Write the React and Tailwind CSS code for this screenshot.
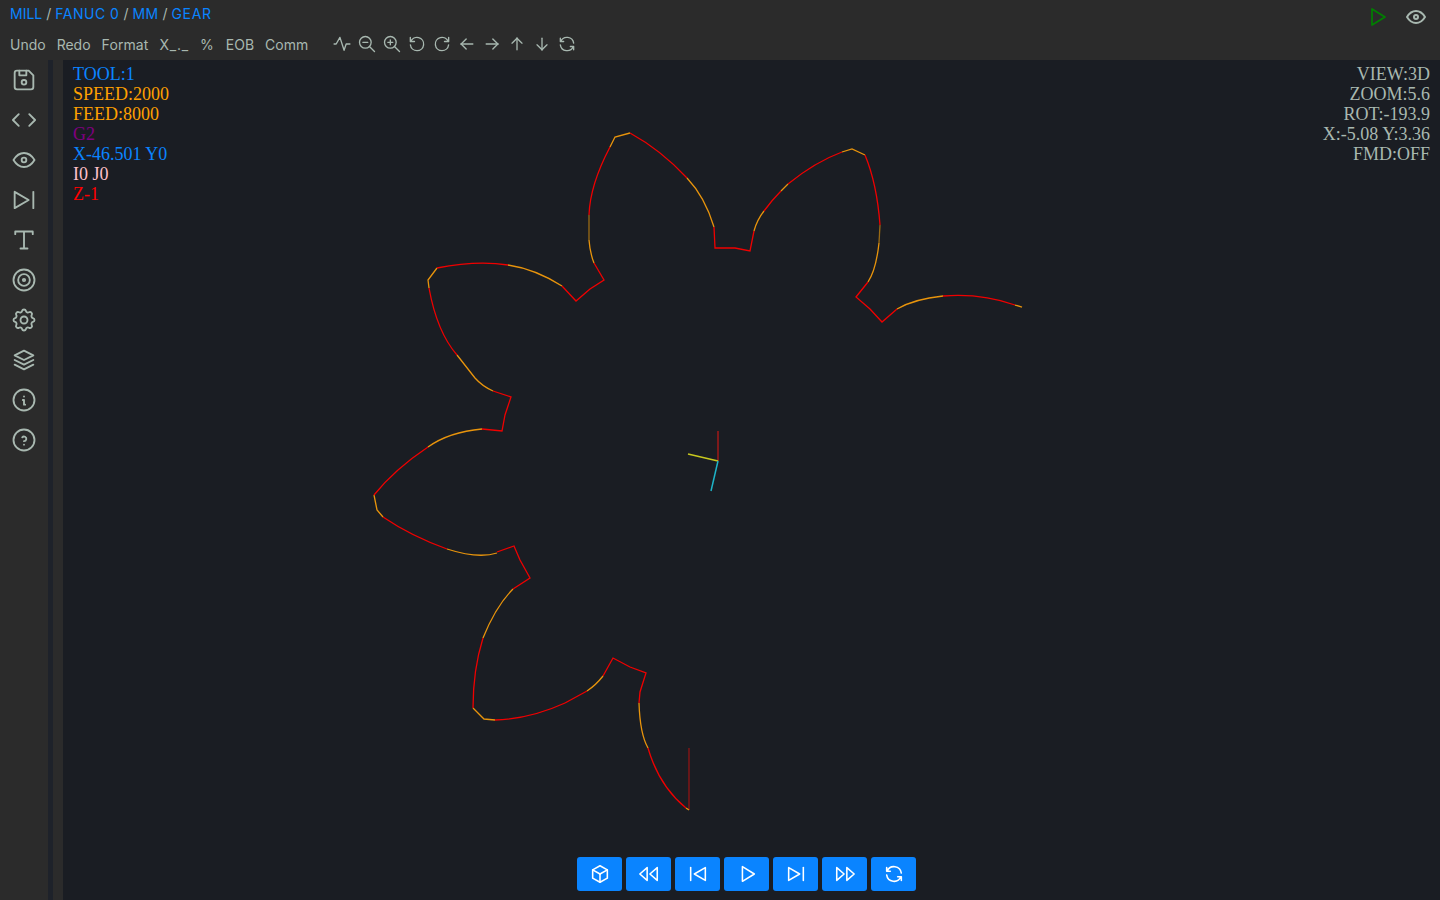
import React from "react";
import {
  TbDeviceFloppy, TbEye, TbPlayerSkipForward, TbTarget, TbSettings, TbStack2, TbInfoCircle,
  TbHelpCircle, TbPlayerPlay, TbZoomIn, TbZoomOut, TbReload, TbArrowLeft,
  TbArrowRight, TbArrowUp, TbArrowDown, TbRefresh, TbBox, TbPlayerTrackPrev,
  TbPlayerSkipBack, TbPlayerTrackNext,
} from "react-icons/tb";

const R = "#f00000";
const O = "#e8940c";
const D = "#9a6a14";

// toolpath traced from the picture, [colour, path]
const toolpath = [
  ["#8f1414", "M689 748V810"],
  [O, "M689 810L686 808"],
  [R, "M686 808Q659 786 648 748"],
  [O, "M648 748Q640 734 639 703"],
  [R, "M639 703L640 692L646 673L630 667L613 658L603 676"],
  [O, "M603 676Q596 685 587 691"],
  [R, "M587 691L565 703"],
  [R, "M565 703Q530 719 495 720"],
  [O, "M495 720L484 719L473 708"],
  [R, "M473 708Q473 670 483 638"],
  [O, "M483 638Q496 606 513 589"],
  [R, "M513 589L530 578L520 560L514 546L497 552"],
  [O, "M497 553Q478 559 447 549"],
  [R, "M447 549Q411 536 383 517"],
  [O, "M383 517L377 510L374 495"],
  [R, "M374 495Q395 469 428 447"],
  [O, "M428 447Q449 432 482 429"],
  [R, "M482 429L502 431L505 415L511 397L493 391"],
  [O, "M493 391Q482 386 475 378L457 355"],
  [R, "M457 355Q437 332 429 288"],
  [O, "M429 288L428 280L437 268"],
  [R, "M437 268Q477 260 508 265"],
  [O, "M508 265Q535 269 562 286"],
  [R, "M562 286L576 301L590 289L604 280L594 263"],
  [O, "M594 263Q590 253 589 240"],
  [D, "M589 240V215"],
  [R, "M589 215Q590 185 610 147"],
  [O, "M610 147L615 137L630 133"],
  [R, "M630 133Q661 150 687 178"],
  [O, "M687 178Q705 197 714 227"],
  [R, "M714 227L715 248L735 248L750 251L754 231"],
  [O, "M754 231Q757 220 764 211"],
  [R, "M764 211Q772 200 781 191"],
  [O, "M781 191L788 184"],
  [R, "M788 184Q815 162 842 152"],
  [O, "M842 152L852 149L865 155"],
  [R, "M865 155Q877 184 880 225"],
  [D, "M880 225L879 243"],
  [O, "M879 243Q876 270 868 282"],
  [R, "M868 282L856 297L870 309L882 322L897 309"],
  [O, "M897 309Q914 299 943 296"],
  [R, "M943 296Q981 293 1015 305"],
  [O, "M1015 305L1022 307"],
];

const CodeIcon = ({ size, strokeWidth, className }) => (
  <svg width={size} height={size} viewBox="0 0 24 24" fill="none" stroke="currentColor" strokeWidth={strokeWidth} strokeLinecap="round" strokeLinejoin="round" className={className}>
    <path d="M7.5 7l-5 5l5 5M16.5 7l5 5l-5 5" />
  </svg>
);

const SerifT = ({ size, strokeWidth, className }) => (
  <svg width={size} height={size} viewBox="0 0 24 24" fill="none" stroke="currentColor" strokeWidth={strokeWidth} strokeLinecap="round" strokeLinejoin="round" className={className}>
    <path d="M4.5 7V4.7H19.5V7M12 4.7V19.3M9 19.3H15" />
  </svg>
);

const PulseIcon = ({ size, strokeWidth, className }) => (
  <svg width={size} height={size} viewBox="0 0 24 24" fill="none" stroke="currentColor" strokeWidth={strokeWidth} strokeLinecap="round" strokeLinejoin="round" className={className}>
    <path d="M2.5 12h2.5L9.5 4l5 15.5L17 12h4.5" />
  </svg>
);

const ReloadCcw = (props) => <TbReload {...props} className={props.className + " -scale-x-100"} />;

const topIcons = [PulseIcon, TbZoomOut, TbZoomIn, ReloadCcw, TbReload, TbArrowLeft, TbArrowRight, TbArrowUp, TbArrowDown, TbRefresh];
const sideIcons = [TbDeviceFloppy, CodeIcon, TbEye, TbPlayerSkipForward, SerifT, TbTarget, TbSettings, TbStack2, TbInfoCircle, TbHelpCircle];
const controls = [TbBox, TbPlayerTrackPrev, TbPlayerSkipBack, TbPlayerPlay, TbPlayerSkipForward, TbPlayerTrackNext, TbRefresh];

export default function App() {
  return (
    <div className="w-[1440px] h-[900px] overflow-hidden flex flex-col bg-[#1a1d23] font-['Inter',sans-serif]">
      {/* barra superior */}
      <header className="h-[60px] shrink-0 bg-[#2b2b2b] flex flex-col">
        <div className="h-7 pl-[10px] pr-[12px] flex items-center justify-between text-sm text-[#a8b8b0]">
          <div className="flex gap-1 leading-none">
            <span className="text-[#0a84ff]">MILL</span>/<span className="text-[#0a84ff] tracking-[0.5px]">FANUC 0</span>/
            <span className="text-[#0a84ff] tracking-[0.3px]">MM</span>/<span className="text-[#0a84ff] tracking-[0.7px]">GEAR</span>
          </div>
          <div className="flex items-center gap-[15px] pt-[6px]">
            <TbPlayerPlay size={24} strokeWidth={1.7} className="text-[#008000]" />
            <TbEye size={24} className="text-[#a8b8b0]" />
          </div>
        </div>
        <div className="flex items-center pl-[10px] mt-[6px] h-5">
          <div className="flex gap-[11px] pt-[2px] text-sm leading-none text-[#a8b8b0]">
            <span>Undo</span>
            <span>Redo</span>
            <span className="tracking-[0.1px]">Format</span>
            <span className="tracking-[0.8px]">X_._</span>
            <span className="tracking-[1px]">%</span>
            <span>EOB</span>
            <span>Comm</span>
          </div>
          <div className="flex gap-[5px] ml-6">
            {topIcons.map((Icon, i) => (
              <Icon key={i} size={20} strokeWidth={1.6} className="text-[#a8b8b0]" />
            ))}
          </div>
        </div>
      </header>

      <div className="flex-1 flex min-h-0">
        {/* barra lateral */}
        <aside className="w-12 shrink-0 bg-[#2b2b2b] flex flex-col items-center pt-[6px] gap-3">
          {sideIcons.map((Icon, i) => (
            <Icon key={i} size={28} strokeWidth={1.6} className="text-[#a8b8b0]" />
          ))}
        </aside>
        <div className="w-[5px] shrink-0 bg-[#1e222a]" />
        <div className="w-[10px] shrink-0 bg-[#2b2b2b]" />

        {/* area do simulador */}
        <main className="relative flex-1 bg-[#1a1d23] font-['Liberation_Serif',serif] text-lg leading-5">
          <svg className="absolute left-[-63px] top-[-60px]" width="1440" height="900" fill="none" strokeWidth="1.3">
            {toolpath.map(([c, d], i) => (
              <path key={i} d={d} stroke={c} />
            ))}
            <line x1="718" y1="431" x2="718" y2="461" stroke="#a01818" strokeWidth="1.5" />
            <line x1="718" y1="461" x2="688" y2="454" stroke="#c8c81e" strokeWidth="1.5" />
            <line x1="718" y1="461" x2="711" y2="491" stroke="#1eb4c8" strokeWidth="1.5" />
          </svg>

          <div className="absolute left-[10px] top-1">
            <div className="text-[#0a84ff]">TOOL:1</div>
            <div className="text-[#ffa000]">SPEED:2000</div>
            <div className="text-[#ffa000]">FEED:8000</div>
            <div className="text-[#800080]">G2</div>
            <div className="text-[#0a84ff]">X-46.501 Y0</div>
            <div className="text-[#ffc0cb]">I0 J0</div>
            <div className="text-[#ff0000]">Z-1</div>
          </div>

          <div className="absolute right-[10px] top-1 text-right text-[#a8b8b0]">
            <div>VIEW:3D</div>
            <div>ZOOM:5.6</div>
            <div>ROT:-193.9</div>
            <div>X:-5.08 Y:3.36</div>
            <div>FMD:OFF</div>
          </div>

          <div className="absolute left-[514px] bottom-[9px] flex gap-1">
            {controls.map((Icon, i) => (
              <button key={i} className="w-[45px] h-[34px] rounded-[3px] bg-[#0a84ff] flex items-center justify-center">
                <Icon size={22} strokeWidth={1.7} className="text-white" />
              </button>
            ))}
          </div>
        </main>
      </div>
    </div>
  );
}
